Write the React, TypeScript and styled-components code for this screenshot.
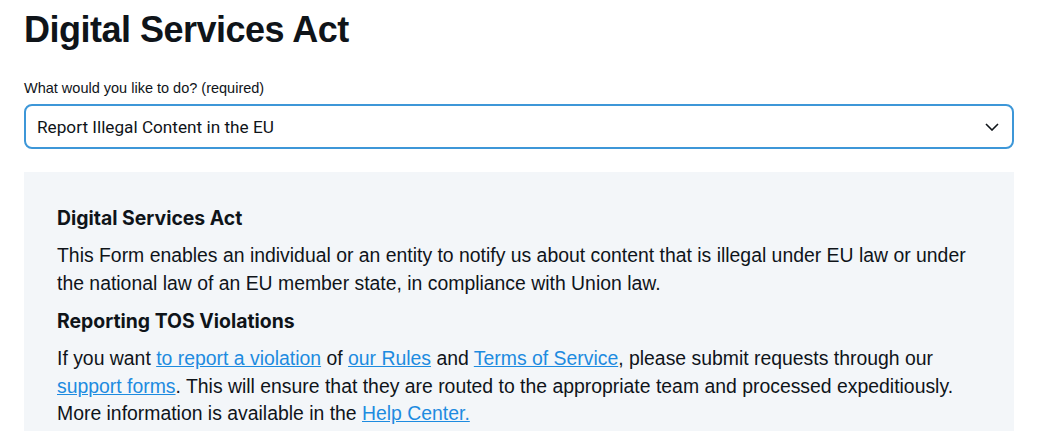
import styled, { createGlobalStyle } from "styled-components";

const GlobalStyle = createGlobalStyle`
  body {
    margin: 0;
    background: #ffffff;
    font-family: "Liberation Sans", Arial, sans-serif;
    color: #0f1419;
  }
`;

function App() {
  return (
    <>
      <GlobalStyle />
      <Page>
        <Title>Digital Services Act</Title>
        <Field>
          <Label htmlFor="action">What would you like to do? (required)</Label>
          <SelectBox>
            <Select id="action" defaultValue="eu">
              <option value="eu">Report Illegal Content in the EU</option>
            </Select>
            <Chevron viewBox="0 0 14 8" aria-hidden="true">
              <polyline points="1,1 7,7 13,1" />
            </Chevron>
          </SelectBox>
        </Field>
        <Panel>
          <PanelHeading>Digital Services Act</PanelHeading>
          <Paragraph>
            This Form enables an individual or an entity to notify us about content that is
            illegal under EU law or under the national law of an EU member state, in
            compliance with Union law.
          </Paragraph>
          <PanelHeading>Reporting TOS Violations</PanelHeading>
          <Paragraph>
            If you want <Link href="#">to report a violation</Link> of{" "}
            <Link href="#">our Rules</Link> and <Link href="#">Terms of Service</Link>, please
            submit requests through our <Link href="#">support forms</Link>. This will ensure
            that they are routed to the appropriate team and processed expeditiously. More
            information is available in the <Link href="#">Help Center.</Link>
          </Paragraph>
        </Panel>
      </Page>
    </>
  );
}

export default App;

const Page = styled.main`
  padding: 10px 28px 0 24px;
  display: flex;
  flex-direction: column;
`;

const Title = styled.h1`
  margin: 0;
  font-family: "Liberation Sans", Arial, sans-serif;
  font-size: 36px;
  font-weight: 700;
  line-height: 40px;
  letter-spacing: -0.5px;
  color: #0f1419;
`;

const Field = styled.div`
  display: flex;
  flex-direction: column;
  margin-top: 28px;
`;

const Label = styled.label`
  font-size: 14.5px;
  line-height: 20px;
  color: #0f1419;
  margin-bottom: 6px;
`;

const SelectBox = styled.div`
  position: relative;
  height: 45px;
`;

const Select = styled.select`
  appearance: none;
  width: 100%;
  height: 100%;
  box-sizing: border-box;
  border: 2px solid #3d97d8;
  border-radius: 8px;
  background: #ffffff;
  padding: 0 40px 0 11px;
  font-family: Roboto, "Liberation Sans", sans-serif;
  font-size: 17.2px;
  color: #0f1419;
  outline: none;
`;

const Chevron = styled.svg`
  position: absolute;
  right: 15px;
  top: 19px;
  width: 14px;
  height: 8px;
  fill: none;
  stroke: #0f1419;
  stroke-width: 1.6;
  pointer-events: none;
`;

const Panel = styled.section`
  margin-top: 23px;
  background: #f3f6f9;
  padding: 32px 33px 20px;
  display: flex;
  flex-direction: column;
`;

const PanelHeading = styled.h2`
  margin: 0 0 10px;
  font-family: Inter, "Liberation Sans", sans-serif;
  font-size: 19.4px;
  font-weight: 700;
  line-height: 28px;
  color: #0f1419;
`;

const Paragraph = styled.p`
  margin: 0 0 10px;
  font-size: 19.4px;
  line-height: 27.5px;
  color: #0f1419;
`;

const Link = styled.a`
  color: #1d8be0;
  text-decoration: underline;
`;
